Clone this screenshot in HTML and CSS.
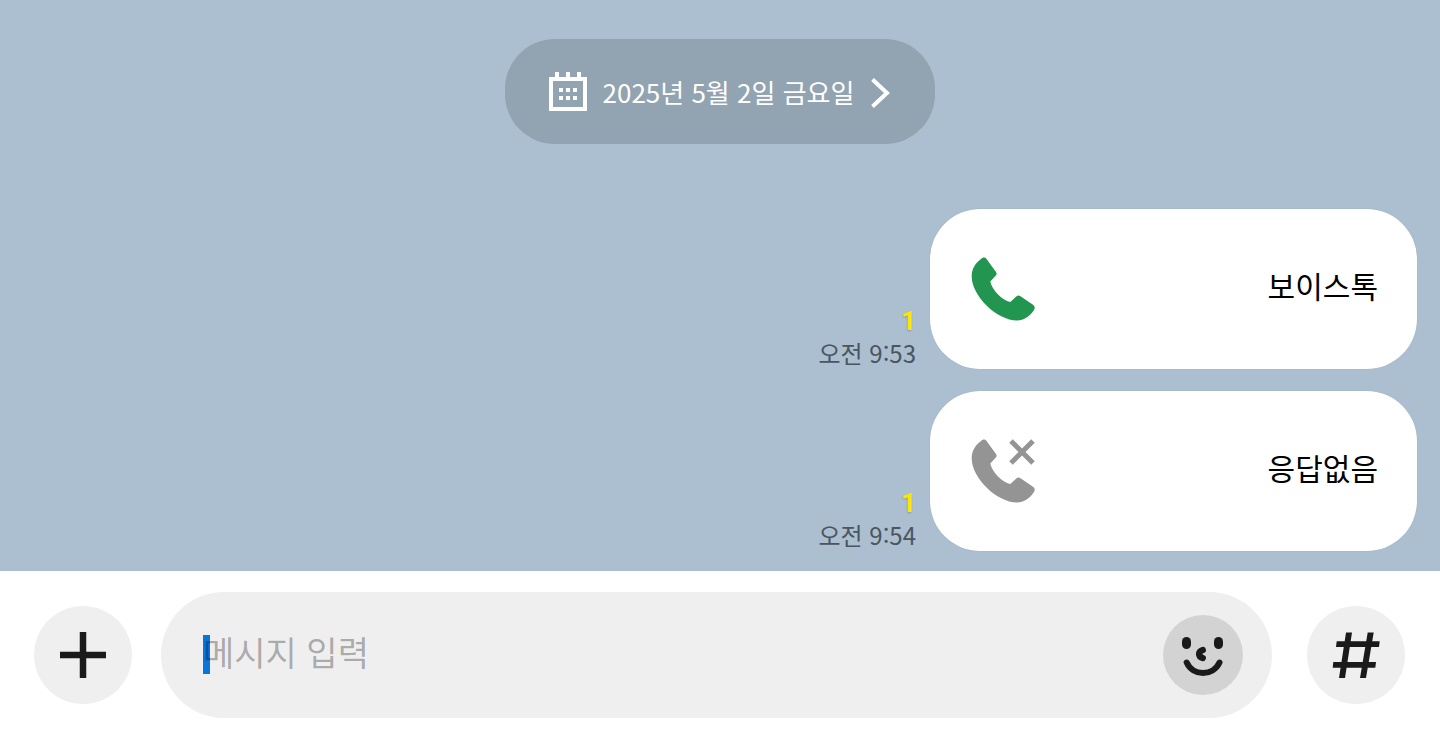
FILE: index.html
```html
<!DOCTYPE html>
<html lang="ko">
<head>
  <meta charset="UTF-8" />
  <meta name="viewport" content="width=device-width, initial-scale=1.0" />
  <title>채팅</title>
  <link rel="stylesheet" href="styles.css">
</head>
<body>
  <main class="chat">
    <button type="button" class="date-pill">
      <svg class="icon-calendar" viewBox="0 0 40 40">
        <path d="M3 7h34v30H3z" fill="none" stroke="#fff" stroke-width="4"/>
        <path d="M7 0h4v6H7zM18 0h4v6h-4zM29 0h4v6h-4zM11 16h4v4h-4zM18 16h4v4h-4zM25 16h4v4h-4zM11 24h4v4h-4zM18 24h4v4h-4zM25 24h4v4h-4z" fill="#fff"/>
      </svg>
      <span class="date-text">2025년 5월 2일 금요일</span>
      <svg class="icon-chevron" viewBox="0 0 20 32">
        <path d="M2.500 3.500L17 17L2.500 30.500" fill="none" stroke="#fff" stroke-width="4"/>
      </svg>
    </button>

    <div class="messages">
      <div class="message">
        <div class="meta">
          <span class="unread">1</span>
          <time class="time">오전 9:53</time>
        </div>
        <div class="bubble">
          <svg class="icon-call" viewBox="0 0 64 64">
            <path d="M10 2C12 .4 14 0 15.200 1.600L25 15C26 16.500 25.800 17.500 24.800 18.500L19.300 24.500C21 33 31 43 39.300 45L45.300 39.600C46.800 38.200 48 38.200 49.500 39.200L62 47.800C64 49.300 64.200 51 63 53C59 59 53 63.500 46 63.500C26 63.500 .7 39 .7 19.500C.7 12 4 6.500 10 2Z" fill="#229651"/>
          </svg>
          <span class="bubble-text">보이스톡</span>
        </div>
      </div>

      <div class="message">
        <div class="meta">
          <span class="unread">1</span>
          <time class="time">오전 9:54</time>
        </div>
        <div class="bubble">
          <svg class="icon-call" viewBox="0 0 64 64">
            <path d="M10 2C12 .4 14 0 15.200 1.600L25 15C26 16.500 25.800 17.500 24.800 18.500L19.300 24.500C21 33 31 43 39.300 45L45.300 39.600C46.800 38.200 48 38.200 49.500 39.200L62 47.800C64 49.300 64.200 51 63 53C59 59 53 63.500 46 63.500C26 63.500 .7 39 .7 19.500C.7 12 4 6.500 10 2Z" fill="#949494"/>
            <path d="M40 2L62 24M62 2L40 24" stroke="#949494" stroke-width="5"/>
          </svg>
          <span class="bubble-text">응답없음</span>
        </div>
      </div>
    </div>
  </main>

  <form class="composer">
    <button type="button" class="round-btn" aria-label="추가">
      <svg class="icon-round" viewBox="0 0 48 48">
        <path d="M24 1v46M1 24h46" stroke="#1a1a1a" stroke-width="6.500"/>
      </svg>
    </button>

    <div class="field">
      <span class="caret"></span>
      <input type="text" class="field-input" placeholder="메시지 입력" aria-label="메시지 입력">
      <button type="button" class="emoji-btn" aria-label="이모티콘">
        <svg class="icon-face" viewBox="0 0 80 80">
          <rect x="19" y="22" width="9" height="12" rx="4.500" fill="#1a1a1a"/>
          <rect x="51" y="22" width="9" height="12" rx="4.500" fill="#1a1a1a"/>
          <path d="M39.700 35C35 36.500 35 41.500 39.700 43" fill="none" stroke="#1a1a1a" stroke-width="6.500" stroke-linecap="round"/>
          <path d="M23.700 47.500C30 61.500 50 61.500 56.500 47.500" fill="none" stroke="#1a1a1a" stroke-width="6" stroke-linecap="round"/>
        </svg>
      </button>
    </div>

    <button type="button" class="round-btn" aria-label="샵 검색">
      <svg class="icon-round" viewBox="0 0 48 48">
        <path d="M14 1.500h6L13 47H7zM35.700 1.500h6L34 47h-6zM4.700 10.300h43L47 16H4zM1.300 31H44L43.300 36.700H.7z" fill="#1a1a1a"/>
      </svg>
    </button>
  </form>
</body>
</html>
```

FILE: styles.css
```css
* { margin: 0; padding: 0; box-sizing: border-box; }
body {
  min-height: 100vh;
  display: flex;
  flex-direction: column;
  font-family: "Noto Sans CJK KR", sans-serif;
  background: #abbfd0;
}
button, input {
  font-family: inherit;
  border: none;
  outline: none;
}
button {
  cursor: pointer;
}
svg {
  display: block;
  flex: none;
}

/* Chat area */
.chat {
  flex: 1;
  display: flex;
  flex-direction: column;
  align-items: center;
  padding: 39px 23px 20px;
}

.date-pill {
  display: flex;
  align-items: center;
  height: 105px;
  padding: 0 45px 0 43px;
  border-radius: 50px;
  background: #92a3b1;
  color: #fff;
}
.date-text {
  margin: 0 16px 0 15px;
  font-size: 26px;
  line-height: 32px;
}
.icon-calendar {
  width: 40px;
  height: 40px;
}
.icon-chevron {
  width: 20px;
  height: 32px;
}

.messages {
  align-self: stretch;
  margin-top: auto;
  padding-top: 65px;
  display: flex;
  flex-direction: column;
  gap: 22px;
}
.message {
  display: flex;
  justify-content: flex-end;
  align-items: flex-end;
  gap: 14px;
}
.meta {
  display: flex;
  flex-direction: column;
  align-items: flex-end;
  line-height: 32px;
}
.unread {
  font-family: Roboto, sans-serif;
  font-size: 26px;
  font-weight: bold;
  color: #fde500;
  text-shadow: 0 1px 2px rgba(0, 0, 0, 0.2);
}
.time {
  font-size: 24px;
  color: #4a565f;
}

.bubble {
  width: 487px;
  height: 160px;
  padding: 0 39px 0 41px;
  display: flex;
  align-items: center;
  justify-content: space-between;
  border-radius: 50px;
  background: #fff;
  box-shadow: 0 0 1px rgba(0, 0, 0, 0.2);
}
.bubble-text {
  padding-bottom: 8px;
  font-size: 30px;
  line-height: 40px;
  color: #000;
}
.icon-call {
  width: 64px;
  height: 64px;
}

/* Message input bar */
.composer {
  display: flex;
  align-items: center;
  padding: 21px 35px 21px 34px;
  background: #fff;
}
.round-btn {
  width: 98px;
  height: 98px;
  flex: none;
  display: flex;
  align-items: center;
  justify-content: center;
  border-radius: 50%;
  background: #efefef;
}
.icon-round {
  width: 48px;
  height: 48px;
}

.field {
  position: relative;
  flex: 1;
  height: 126px;
  margin: 0 35px 0 29px;
  padding: 0 29px 0 42px;
  display: flex;
  align-items: center;
  border-radius: 63px;
  background: #efefef;
}
.caret {
  position: absolute;
  left: 42px;
  top: 43px;
  width: 7px;
  height: 39px;
  background: #0a74da;
}
.field-input {
  position: relative;
  flex: 1;
  min-width: 0;
  height: 64px;
  padding-bottom: 8px;
  font-size: 34px;
  background: transparent;
  color: #1a1a1a;
}
.field-input::placeholder {
  color: rgba(0, 0, 0, 0.3);
}
.emoji-btn {
  width: 80px;
  height: 80px;
  flex: none;
  border-radius: 50%;
  background: #d3d3d3;
}
.icon-face {
  width: 80px;
  height: 80px;
}
```
